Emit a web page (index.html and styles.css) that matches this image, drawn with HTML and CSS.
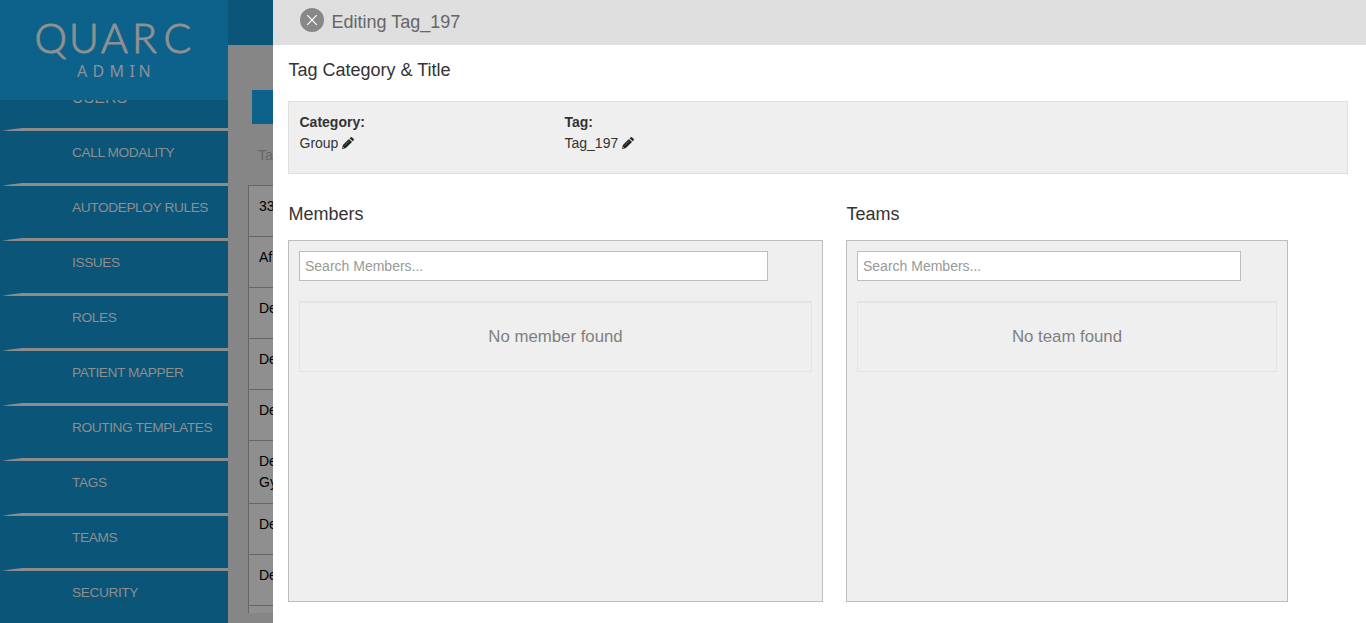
FILE: index.html
```html
<!DOCTYPE html>
<html lang="en">
<head>
<meta charset="utf-8">
<title>Quarc Admin</title>
<link rel="stylesheet" href="styles.css">
</head>
<body>
<div class="app">
  <aside class="sidebar">
    <div class="brand">
      <svg width="228" height="100" viewBox="0 0 228 100">
        <text class="brand-name" y="53"><tspan x="34.500">Q</tspan><tspan x="69">U</tspan><tspan x="101">A</tspan><tspan x="132">R</tspan><tspan x="163.500">C</tspan></text>
        <text class="brand-sub" y="77"><tspan x="77">A</tspan><tspan x="92.500">D</tspan><tspan x="109.500">M</tspan><tspan x="129.500">I</tspan><tspan x="138.500">N</tspan></text>
      </svg>
    </div>
    <nav class="menu">
      <a class="item current">USERS</a>
      <a class="item">CALL MODALITY</a>
      <a class="item">AUTODEPLOY RULES</a>
      <a class="item">ISSUES</a>
      <a class="item">ROLES</a>
      <a class="item">PATIENT MAPPER</a>
      <a class="item">ROUTING TEMPLATES</a>
      <a class="item">TAGS</a>
      <a class="item">TEAMS</a>
      <a class="item">SECURITY</a>
    </nav>
  </aside>
  <section class="page">
    <div class="topbar"></div>
    <div class="action"></div>
    <div class="column-label">Ta</div>
    <div class="table">
      <div class="row">33</div>
      <div class="row">Af</div>
      <div class="row">De</div>
      <div class="row">De</div>
      <div class="row">De</div>
      <div class="row tall">De<br>Gy</div>
      <div class="row">De</div>
      <div class="row">De</div>
      <div class="row"></div>
    </div>
  </section>
  <main class="editor">
    <header class="editor-head">
      <svg class="close" width="24" height="24" viewBox="0 0 24 24"><circle cx="12" cy="12" r="12" fill="#888"/><path d="M7.200 7.200l9.600 9.600M16.800 7.200l-9.600 9.600" stroke="#fff" stroke-width="1.200"/></svg>
      <span class="editor-title">Editing Tag_197</span>
    </header>
    <div class="content">
      <h2 class="heading">Tag Category &amp; Title</h2>
      <div class="summary">
        <div class="field"><b>Category:</b><span>Group <svg class="pencil" viewBox="0 0 12 12"><path d="M0 12L.9 8.100L7 2l3 3L3.900 11.100zM7.700 1.300L8.700.3Q9.300-.3 9.900.3L11.700 2.100Q12.300 2.700 11.700 3.300L10.700 4.300z" fill="#222"/><path d="M1.100 10.200l.8.800" stroke="#eee" stroke-width=".8"/><path d="M2.700 8.500L7.300 3.900" stroke="#888" stroke-width=".6"/></svg></span></div>
        <div class="field"><b>Tag:</b><span>Tag_197 <svg class="pencil" viewBox="0 0 12 12"><path d="M0 12L.9 8.100L7 2l3 3L3.900 11.100zM7.700 1.300L8.700.3Q9.300-.3 9.900.3L11.700 2.100Q12.300 2.700 11.700 3.300L10.700 4.300z" fill="#222"/><path d="M1.100 10.200l.8.800" stroke="#eee" stroke-width=".8"/><path d="M2.700 8.500L7.300 3.900" stroke="#888" stroke-width=".6"/></svg></span></div>
      </div>
      <div class="groups">
        <section class="group members">
          <h2 class="heading">Members</h2>
          <div class="panel">
            <input class="search" type="text" placeholder="Search Members...">
            <div class="empty">No member found</div>
          </div>
        </section>
        <section class="group teams">
          <h2 class="heading">Teams</h2>
          <div class="panel">
            <input class="search" type="text" placeholder="Search Members...">
            <div class="empty">No team found</div>
          </div>
        </section>
      </div>
    </div>
  </main>
</div>
</body>
</html>
```
FILE: styles.css
```css
* { box-sizing: border-box; }
body {
  margin: 0;
  font: 14px/21px "Liberation Sans", Arial, sans-serif;
  color: #333;
  overflow: hidden;
}
.app { display: flex; height: 623px; overflow: hidden; background: #fff; }

.sidebar {
  display: flex;
  flex-direction: column;
  flex: 0 0 228px;
  overflow: hidden;
  background: #0a5578;
}
.brand { flex: none; height: 100px; background: #0c628b; z-index: 1; }
.brand svg { display: block; }
.brand-name {
  font: 300 41px Lato, sans-serif;
  fill: #909090;
  stroke: #909090;
  stroke-width: 1;
  stroke-linejoin: round;
}
.brand-sub { font: 400 16px "Noto Sans", sans-serif; fill: #8c9296; }
.menu { flex: none; margin-top: -24px; }
.item {
  display: block;
  position: relative;
  height: 55px;
  padding: 11px 0 0 72px;
  font-size: 13.700px;
  letter-spacing: -.4px;
  color: #8f8f8f;
}
.item.current { font-size: 16px; letter-spacing: 0; }
.item::after {
  content: "";
  position: absolute;
  left: 2px;
  right: 0;
  bottom: 0;
  height: 3px;
  background: #8c8c8c;
  clip-path: polygon(0 2.500px, 20px 0, 100% 0, 100% 3px, 8px 3px);
}

.page { flex: 0 0 45px; overflow: hidden; background: #868686; }
.topbar { height: 45px; background: #0a5578; }
.action { height: 34px; margin: 45px 0 0 24px; background: #0c628b; }
.column-label { margin: 21px 0 19px 30px; color: #666; }
.table {
  height: 428px;
  width: 100px;
  margin-left: 20px;
  overflow: hidden;
  border-left: 1px solid #656565;
  background: #8f8f8f;
  color: #000;
}
.row { height: 51px; padding: 10px; border-top: 1px solid #656565; }
.row.tall { height: 63px; }

.editor { flex: 1; min-width: 0; background: #fff; }
.editor-head {
  display: flex;
  height: 45px;
  padding: 8px 0 0 27px;
  background: #dfdfdf;
}
.editor-title { margin: 4px 0 0 7.500px; font-size: 18px; color: #666; }
.content { padding: 14px 18px 0 15px; }
.heading { margin: 0; padding-left: .5px; font-size: 18px; line-height: 22px; font-weight: 400; color: #333; }
.summary {
  display: flex;
  height: 73px;
  margin-top: 20px;
  padding: 10px 10px 10px 10.500px;
  border: 1px solid #dfdfdf;
  background: #efefef;
}
.field { display: flex; flex-direction: column; width: 265px; }
.pencil { width: 12px; height: 12px; vertical-align: -1px; overflow: visible; }
.groups { display: flex; gap: 23px; margin-top: 29px; }
.members { width: 535px; }
.teams { width: 442px; }
.panel {
  height: 362px;
  margin-top: 15px;
  padding: 10px;
  border: 1px solid #bdbdbd;
  background: #efefef;
}
.search {
  display: block;
  width: 384px;
  height: 30px;
  padding: 0 5px;
  border: 1px solid #bdbdbd;
  border-radius: 0;
  background: #fff;
  font: 14px "Liberation Sans", Arial, sans-serif;
}
.members .search { width: 469px; }
.search::placeholder { color: #999; opacity: 1; }
.empty {
  height: 71px;
  margin-top: 20px;
  border: 1px solid #e3e3e3;
  box-shadow: inset 0 1px 1px rgba(0, 0, 0, .05);
  font-size: 16.800px;
  line-height: 69px;
  text-align: center;
  color: #808080;
}
```
